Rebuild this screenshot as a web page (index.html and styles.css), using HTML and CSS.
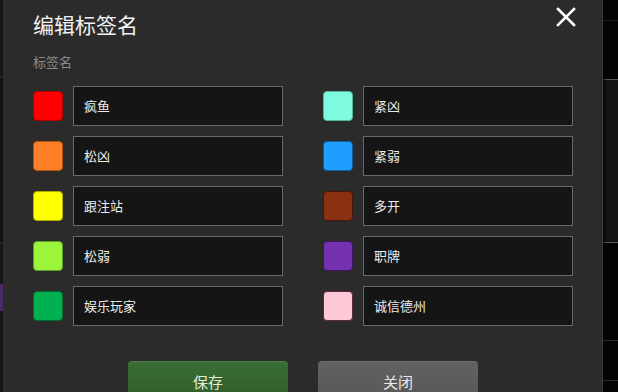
FILE: index.html
```html
<!DOCTYPE html>
<html lang="zh">
<head>
<meta charset="utf-8">
<link rel="stylesheet" href="styles.css">
</head>
<body>
<div class="page">
  <div class="left-strip">
    <div class="ls-a"></div>
    <div class="ls-b"></div>
    <div class="ls-purple"></div>
    <div class="ls-c"></div>
  </div>
  <div class="dialog">
    <div class="header">
      <h1 class="title">编辑标签名</h1>
      <button class="close" aria-label="关闭">
        <svg width="20" height="20" viewBox="0 0 20 20"><path d="M2 2 L18 18 M18 2 L2 18" stroke="#ffffff" stroke-width="2.6" stroke-linecap="square" fill="none"/></svg>
      </button>
    </div>
    <div class="label">标签名</div>
    <div class="grid">
      <div class="row"><span class="sw" style="background:#ff0000;border-color:#b00000"></span><div class="inp">疯鱼</div></div>
      <div class="row"><span class="sw" style="background:#7ffae0;border-color:#4fb8a0"></span><div class="inp">紧凶</div></div>
      <div class="row"><span class="sw" style="background:#ff7f27;border-color:#b85510"></span><div class="inp">松凶</div></div>
      <div class="row"><span class="sw" style="background:#1e9fff;border-color:#0d5fa8"></span><div class="inp">紧弱</div></div>
      <div class="row"><span class="sw" style="background:#ffff00;border-color:#b0b000"></span><div class="inp">跟注站</div></div>
      <div class="row"><span class="sw" style="background:#8b3010;border-color:#4a1505"></span><div class="inp">多开</div></div>
      <div class="row"><span class="sw" style="background:#9cf53a;border-color:#5fa020"></span><div class="inp">松弱</div></div>
      <div class="row"><span class="sw" style="background:#7432b0;border-color:#3e1568"></span><div class="inp">职牌</div></div>
      <div class="row"><span class="sw" style="background:#00b050;border-color:#006a2e"></span><div class="inp">娱乐玩家</div></div>
      <div class="row"><span class="sw" style="background:#ffc8d6;border-color:#5a2a3a"></span><div class="inp">诚信德州</div></div>
    </div>
    <div class="actions">
      <button class="btn save">保存</button>
      <button class="btn cancel">关闭</button>
    </div>
  </div>
  <div class="right-strip">
    <div class="rs-top"></div>
    <div class="rs-box"></div>
    <div class="rs-mid"></div>
    <div class="rs-low"></div>
  </div>
</div>
</body>
</html>
```

FILE: styles.css
```css
* { box-sizing: border-box; }
html, body { margin: 0; padding: 0; }
body {
  background: #050505;
  font-family: "Noto Sans CJK SC", "Noto Sans", sans-serif;
  width: 618px;
  height: 392px;
  overflow: hidden;
}
.page {
  display: flex;
  height: 392px;
}
.left-strip {
  width: 3px;
  flex: none;
  background: #161616;
  display: flex;
  flex-direction: column;
}
.ls-a { height: 78px; border-bottom: 1px solid #2e2e2e; }
.ls-b { height: 165px; border-bottom: 1px solid #2e2e2e; background: #111; }
.ls-purple { margin-top: 41px; height: 27px; background: #4a2a6a; }
.ls-c { flex: 1; }

.dialog {
  width: 600px;
  flex: none;
  height: 392px;
  background: #2b2b2b;
  padding: 0 0 0 30px;
  overflow: hidden;
  border-right: 1px solid #3c3c3c;
}
.header {
  display: flex;
  justify-content: space-between;
  align-items: flex-start;
  height: 46px;
}
.title {
  margin: 10px 0 0 0;
  font-size: 21px;
  line-height: 28px;
  font-weight: 400;
  color: #f2f2f2;
}
.close {
  background: none;
  border: 0;
  padding: 0;
  margin: 7px 26px 0 0;
  width: 20px;
  height: 20px;
  display: flex;
}
.label {
  font-size: 13px;
  line-height: 20px;
  color: #8c8c8c;
  height: 40px;
  padding-top: 6px;
}
.grid {
  display: grid;
  grid-template-columns: 250px 250px;
  column-gap: 40px;
  row-gap: 10px;
}
.row {
  display: flex;
  align-items: center;
  gap: 10px;
  height: 40px;
}
.sw {
  width: 30px;
  height: 30px;
  border-radius: 4px;
  border: 1px solid;
  flex: none;
}
.inp {
  width: 210px;
  height: 40px;
  border: 1px solid #6a6a6a;
  background: #151515;
  color: #ececec;
  font-size: 13px;
  line-height: 38px;
  padding-left: 10px;
}
.actions {
  display: flex;
  gap: 30px;
  padding-left: 95px;
  margin-top: 35px;
}
.btn {
  width: 160px;
  height: 40px;
  border: 0;
  border-radius: 4px;
  font-family: "Noto Sans CJK SC", "Noto Sans", sans-serif;
  font-size: 15px;
  padding: 0;
  line-height: 40px;
}
.save {
  background: linear-gradient(#3a6e34, #2f5c2a);
  color: #e4ecdc;
  border-top: 1px solid #4a7e44;
}
.cancel {
  background: linear-gradient(#626262, #575757);
  color: #e8e8e8;
  border-top: 1px solid #6e6e6e;
}
.right-strip {
  flex: 1;
  background: #040404;
  display: flex;
  flex-direction: column;
}
.rs-top { height: 79px; border-top: 1px solid #1a1a1a; margin-top: 20px; height: 59px; }
.rs-box { height: 164px; background: #141414; border-top: 1px solid #5a5a5a; border-bottom: 1px solid #5a5a5a; border-left: 3px solid #0c0c0c; }
.rs-mid { height: 98px; border-bottom: 1px solid #2a2a2a; }
.rs-low { height: 40px; border-bottom: 1px solid #2a2a2a; }
```
